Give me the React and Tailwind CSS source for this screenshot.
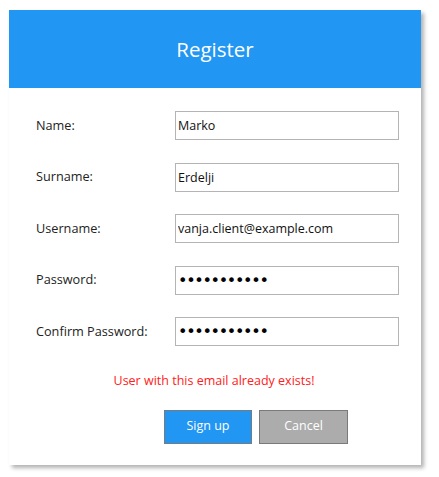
import { useState } from "react";

export default function App() {
  const [name, setName] = useState("Marko");
  const [surname, setSurname] = useState("Erdelji");
  const [username, setUsername] = useState("vanja.client@example.com");
  const [password, setPassword] = useState("marko123456");
  const [confirm, setConfirm] = useState("marko123456");

  const fields = [
    { label: "Name:", value: name, set: setName, type: "text" },
    { label: "Surname:", value: surname, set: setSurname, type: "text" },
    { label: "Username:", value: username, set: setUsername, type: "text" },
    { label: "Password:", value: password, set: setPassword, type: "password" },
    { label: "Confirm Password:", value: confirm, set: setConfirm, type: "password" },
  ];

  return (
    <div className="min-h-[477px] bg-white pt-[10px] pl-[9px]" style={{ fontFamily: "'Open Sans', 'Noto Sans', sans-serif" }}>
      <div className="w-[412px] h-[455px] bg-white shadow-[3px_3px_4px_rgba(0,0,0,0.3)] flex flex-col">
        <div className="h-[78px] bg-[#2196f3] flex items-center justify-center">
          <h2 className="text-white text-[20.5px] leading-none">Register</h2>
        </div>

        <div className="flex flex-col gap-[22.5px] mt-[23px]">
          {fields.map((f) => (
            <div key={f.label} className="flex items-center h-[29px]">
              <label className="w-[166px] pl-[27px] text-[12.7px] text-[#222]">{f.label}</label>
              <input
                type={f.type}
                value={f.value}
                onChange={(e) => f.set(e.target.value)}
                className={
                  f.type === "password"
                    ? "w-[224px] h-[29px] border border-[#b4b4b4] px-[2px] text-[16px] tracking-[-1.3px] text-black outline-none font-['DejaVu_Sans',sans-serif]"
                    : "w-[224px] h-[29px] border border-[#b4b4b4] px-[2px] text-[12.5px] text-[#111] outline-none"
                }
              />
            </div>
          ))}
        </div>

        <p className="mt-[26px] text-center text-[12.5px] text-[#ff2020] pr-[2px]">
          User with this email already exists!
        </p>

        <div className="flex gap-[7px] mt-[19px] pl-[155px]">
          <button className="w-[88px] h-[34px] bg-[#2196f3] border border-[#7a7a7a] text-white text-[12.5px]">
            Sign up
          </button>
          <button className="w-[89px] h-[34px] bg-[#acacac] border border-[#7a7a7a] text-white text-[12.5px]">
            Cancel
          </button>
        </div>
      </div>
    </div>
  );
}
